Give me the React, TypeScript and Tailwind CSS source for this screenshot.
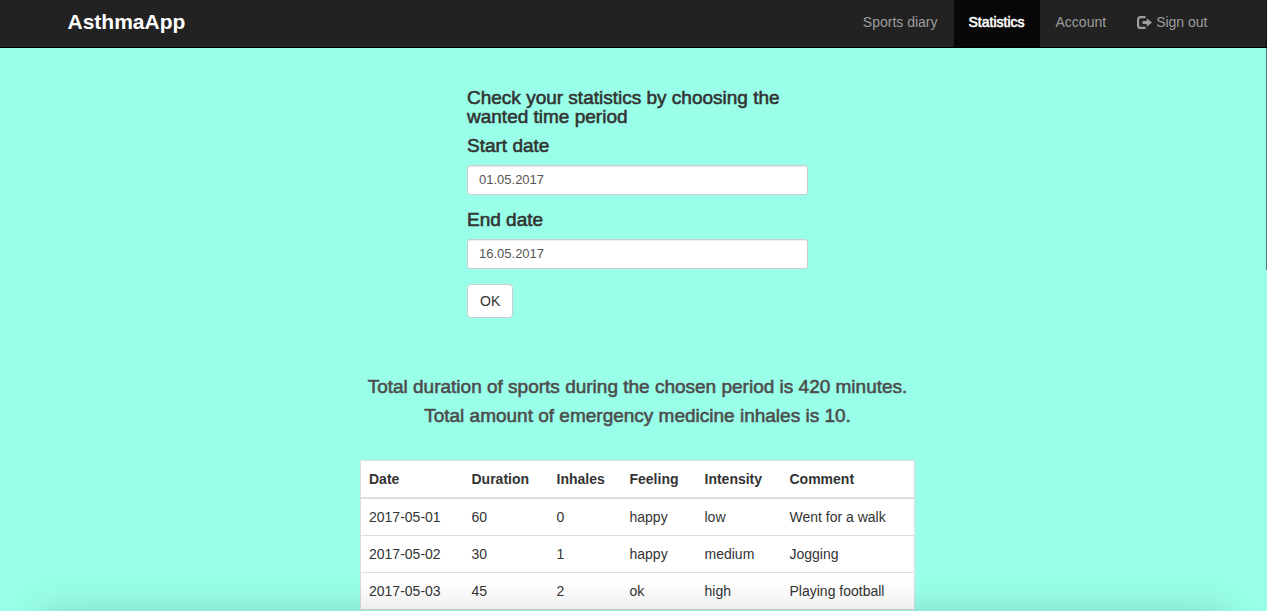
const entries = [
  { date: '2017-05-01', duration: 60, inhales: 0, feeling: 'happy', intensity: 'low', comment: 'Went for a walk' },
  { date: '2017-05-02', duration: 30, inhales: 1, feeling: 'happy', intensity: 'medium', comment: 'Jogging' },
  { date: '2017-05-03', duration: 45, inhales: 2, feeling: 'ok', intensity: 'high', comment: 'Playing football' },
];

const columns = [
  { label: 'Date', width: 'w-[103px]' },
  { label: 'Duration', width: 'w-[85px]' },
  { label: 'Inhales', width: 'w-[73px]' },
  { label: 'Feeling', width: 'w-[75px]' },
  { label: 'Intensity', width: 'w-[85px]' },
  { label: 'Comment', width: 'w-[133px]' },
];

function SignOutIcon() {
  return (
    <svg width="15" height="13" viewBox="0 0 15 13" aria-hidden="true">
      <path d="M8.5 1.1H3.6A2.5 2.5 0 0 0 1.1 3.6v5.8a2.5 2.5 0 0 0 2.5 2.5h4.9" fill="none" stroke="currentColor" strokeWidth="2.2" />
      <path d="M5.5 4.9h4.3V2.3L15 6.5l-5.2 4.2V8.1H5.5z" fill="currentColor" />
    </svg>
  );
}

function Navbar() {
  return (
    <nav className="border-b border-black bg-[#222]">
      <div className="pl-2">
        <div className="mx-auto flex max-w-[1170px] items-start justify-between pl-[15px]">
          <a href="#home" className="pt-3 pb-[15px] text-[21px] leading-5 font-bold text-white">AsthmaApp</a>
          <div className="flex gap-px text-sm leading-5 text-[#9d9d9d]">
            <a href="#diary" className="px-[15px] pt-3 pb-[15px]">Sports diary</a>
            <a href="#statistics" aria-current="page" className="bg-[#080808] px-[15px] pt-3 pb-[15px] text-white [-webkit-text-stroke:0.04em_currentColor]">Statistics</a>
            <a href="#account" className="px-[15px] pt-3 pb-[15px]">Account</a>
            <a href="#signout" className="flex items-center gap-1 px-[15px] pt-3 pb-[15px]">
              <SignOutIcon />
              Sign out
            </a>
          </div>
        </div>
      </div>
    </nav>
  );
}

function DateField({ id, label, value }: { id: string; label: string; value: string }) {
  return (
    <div className="mb-[15px]">
      <label htmlFor={id} className="mb-[9px] block text-[19px] leading-5 [-webkit-text-stroke:0.03em_currentColor]">{label}</label>
      <input
        id={id}
        type="text"
        defaultValue={value}
        className="block h-[30px] w-full rounded-[3px] border border-[#ccc] bg-white px-[11px] pb-[2px] text-[13px] text-[#555] shadow-[inset_0_1px_1px_rgba(0,0,0,0.075)]"
      />
    </div>
  );
}

export default function App() {
  return (
    <div className="min-h-screen bg-[#99ffe9] font-['Liberation_Sans',Arial,sans-serif] text-[#333]">
      <Navbar />
      <main className="flex flex-col items-center pt-10 pl-2">
        <form className="w-[341px]" onSubmit={(event) => event.preventDefault()}>
          <h1 className="mb-[10px] text-[19px] leading-[19px] font-normal [-webkit-text-stroke:0.03em_currentColor]">
            Check your statistics by choosing the wanted time period
          </h1>
          <DateField id="start" label="Start date" value="01.05.2017" />
          <DateField id="end" label="End date" value="16.05.2017" />
          <button type="submit" className="rounded border border-[#ccc] bg-white px-3 py-[6px] text-sm leading-5">OK</button>
        </form>

        <section className="mt-[59px] flex flex-col gap-[10px] text-center text-[19px] leading-[19px] text-[#4d4d4d] [-webkit-text-stroke:0.03em_currentColor]">
          <p>Total duration of sports during the chosen period is 420 minutes.</p>
          <p>Total amount of emergency medicine inhales is 10.</p>
        </section>

        <table className="mt-[35px] w-[555px] table-fixed border-collapse border border-[#ddd] bg-white text-left text-sm leading-5">
          <thead>
            <tr className="border-b-2 border-[#ddd]">
              {columns.map((column) => (
                <th key={column.label} className={`${column.width} p-2 font-bold`}>{column.label}</th>
              ))}
            </tr>
          </thead>
          <tbody>
            {entries.map((entry) => (
              <tr key={entry.date} className="border-b border-[#ddd]">
                <td className="p-2">{entry.date}</td>
                <td className="p-2">{entry.duration}</td>
                <td className="p-2">{entry.inhales}</td>
                <td className="p-2">{entry.feeling}</td>
                <td className="p-2">{entry.intensity}</td>
                <td className="p-2">{entry.comment}</td>
              </tr>
            ))}
          </tbody>
        </table>
      </main>
      <div className="pointer-events-none fixed top-full right-10 left-10 h-10 shadow-[0_0_36px_rgba(0,0,0,0.16)]" />
      <div className="pointer-events-none fixed top-0 right-0 h-[270px] w-px bg-black/50" />
    </div>
  );
}
